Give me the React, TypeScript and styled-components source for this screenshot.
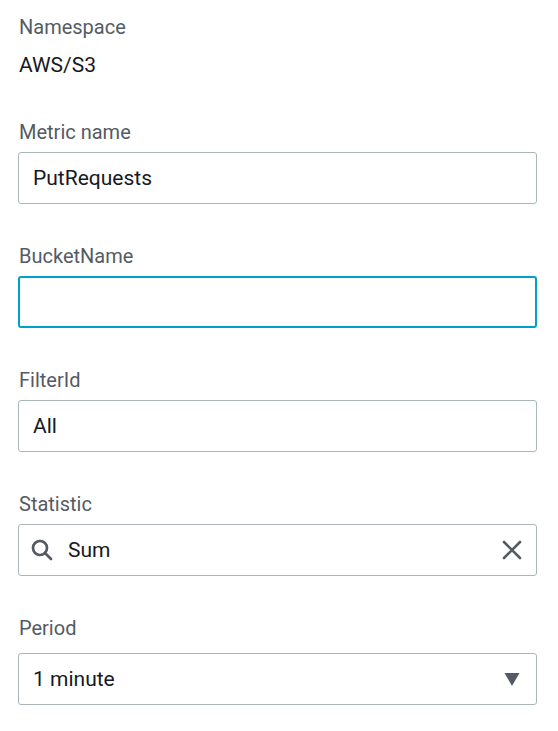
import React from "react";
import styled, { createGlobalStyle } from "styled-components";

const Global = createGlobalStyle`
  html, body { margin: 0; padding: 0; background: #ffffff; }
  body { font-family: Roboto, "Open Sans", "Liberation Sans", sans-serif; }
  * { box-sizing: border-box; }
`;

const Page = styled.div`
  display: flex;
  flex-direction: column;
  gap: 40px;
  padding: 15px 21px 0 18px;
  width: 558px;
`;

const Field = styled.div<{ $extra?: number }>`
  display: flex;
  flex-direction: column;
  padding-bottom: ${(p) => p.$extra ?? 0}px;
`;

const Label = styled.div<{ $gap?: number }>`
  font-size: 20px;
  line-height: 24px;
  color: #545b64;
  padding-left: 1px;
  margin-bottom: ${(p) => (p.$gap ?? 8)}px;
`;

const StaticValue = styled.div`
  font-size: 21px;
  line-height: 24px;
  color: #16191f;
  padding-left: 1px;
  margin-top: 6px;
`;

const Box = styled.div<{ $focused?: boolean }>`
  display: flex;
  align-items: center;
  gap: 12px;
  height: 52px;
  width: 519px;
  border: ${(p) => (p.$focused ? "2px solid #00a1c9" : "1px solid #aab7b8")};
  border-radius: 3px;
  padding: 0 ${(p) => (p.$focused ? 13 : 14)}px;
  background: #fff;
`;

const Value = styled.span<{ $indent?: number }>`
  flex: 1;
  font-size: 21px;
  line-height: 24px;
  color: #16191f;
  margin-left: ${(p) => p.$indent ?? 0}px;
`;

const Icon = styled.svg<{ $shift?: number }>`
  flex: none;
  display: block;
  margin-left: ${(p) => p.$shift ?? 0}px;
`;

const SearchIcon = () => (
  <Icon width="22" height="22" viewBox="0 0 22 22" $shift={-2}>
    <circle cx="9" cy="9" r="7" fill="none" stroke="#545b64" strokeWidth="2.7" />
    <line x1="14" y1="14" x2="20" y2="20" stroke="#545b64" strokeWidth="2.7" strokeLinecap="round" />
  </Icon>
);

const ClearIcon = () => (
  <Icon width="20" height="20" viewBox="0 0 20 20">
    <path d="M2 2 L18 18 M18 2 L2 18" stroke="#545b64" strokeWidth="2.6" strokeLinecap="round" />
  </Icon>
);

const CaretIcon = () => (
  <Icon width="20" height="20" viewBox="0 0 20 20">
    <path d="M2.5 4 L17.5 4 L10 17 Z" fill="#545b64" />
  </Icon>
);

export default function App() {
  return (
    <>
      <Global />
      <Page>
        <Field $extra={3}>
          <Label $gap={8}>Namespace</Label>
          <StaticValue>AWS/S3</StaticValue>
        </Field>
        <Field>
          <Label>Metric name</Label>
          <Box>
            <Value>PutRequests</Value>
          </Box>
        </Field>
        <Field>
          <Label>BucketName</Label>
          <Box $focused>
            <Value></Value>
          </Box>
        </Field>
        <Field>
          <Label>FilterId</Label>
          <Box>
            <Value>All</Value>
          </Box>
        </Field>
        <Field>
          <Label>Statistic</Label>
          <Box>
            <SearchIcon />
            <Value $indent={3}>Sum</Value>
            <ClearIcon />
          </Box>
        </Field>
        <Field>
          <Label $gap={13}>Period</Label>
          <Box>
            <Value>1 minute</Value>
            <CaretIcon />
          </Box>
        </Field>
      </Page>
    </>
  );
}
